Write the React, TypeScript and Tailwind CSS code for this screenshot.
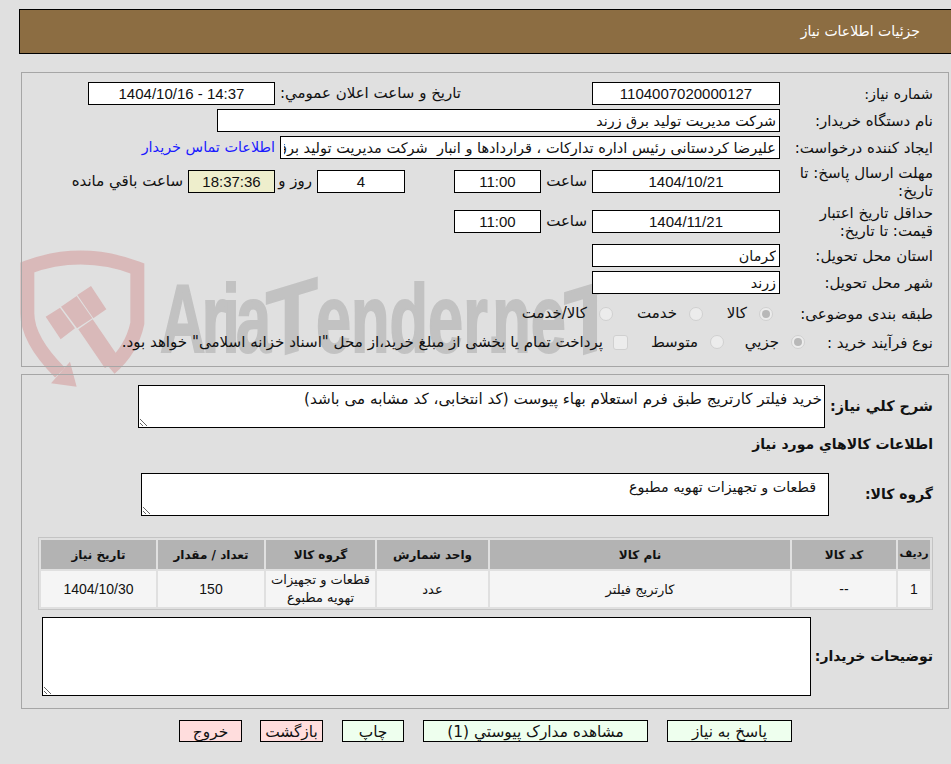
function Field({ value, className = '', num, ltr }: { value?: string; className?: string; num?: boolean; ltr?: boolean }) {
  return (
    <input
      readOnly
      dir={ltr ? 'ltr' : 'rtl'}
      value={value ?? ''}
      className={`h-[23px] shrink-0 border border-black bg-white px-[3px] text-[#111] outline-none ${num ? "text-center font-['Liberation_Sans',sans-serif] text-[15px]" : 'text-[14.3px]'} ${className}`}
    />
  );
}

function Radio({ checked }: { checked?: boolean }) {
  return (
    <span className="w-[14px] h-[14px] shrink-0 rounded-full border border-[#d0d0d0] bg-[#ececec] flex items-center justify-center">
      {checked && <span className="w-[8px] h-[8px] rounded-full bg-[#b8b8b8]" />}
    </span>
  );
}

function Row({ label, className = '', children }: { label: React.ReactNode; className?: string; children?: React.ReactNode }) {
  return (
    <div className={`flex items-center h-[23px] ${className}`}>
      <div className="w-[153px] shrink-0 text-[15px] leading-[18px]">{label}</div>
      {children}
    </div>
  );
}

function Watermark() {
  return (
    <>
      <svg className="absolute left-[15px] top-[240px]" width="300" height="160" viewBox="0 0 900 480">
        <path d="M135 398 Q37 300 37 220 L37 82 Q200 22 367 85 L367 250 Q350 330 285 385" fill="none" stroke="#d9b9b9" strokeWidth="42" />
        <path d="M165 365 L185 440 L108 430 Z" fill="#d9b9b9" />
        <path d="M92 230 L135 203 L180 265 L137 298 Z M138 200 L185 168 L232 235 L186 265 Z M187 165 L228 138 L274 208 L235 235 Z M190 268 L233 238 L310 350 L270 385 Z" fill="#d9b9b9" />
      </svg>
      <div dir="ltr" className="absolute left-[160px] top-[264px] origin-top-left scale-x-[0.65] whitespace-nowrap font-['Liberation_Sans',sans-serif] font-bold text-[97px] leading-[110px] text-[#c2c2c2] [-webkit-text-stroke:2px_#c2c2c2]">
        <span className="tracking-[-6px]">Aria</span>
        <span className="mx-[8px] inline-block scale-x-[1.35] skew-y-[-15deg]">T</span>
        <span>ender</span>
        <span className="tracking-[-20px]">.</span>
        <span>ne</span>
        <span className="mx-[8px] inline-block scale-x-[1.35] skew-y-[-15deg]">T</span>
      </div>
    </>
  );
}

const cols = [32, 104, 300, 111, 109, 106, 115];
const heads = ['رديف', 'کد کالا', 'نام کالا', 'واحد شمارش', 'گروه کالا', 'تعداد / مقدار', 'تاریخ نیاز'];

function GoodsTable() {
  return (
    <table className="mt-[21px] w-[895px] table-fixed border-separate border-spacing-[2px] border border-[#c4c4c4] text-center text-[13px]">
      <colgroup>
        {cols.map((w, i) => (
          <col key={i} style={{ width: w }} />
        ))}
      </colgroup>
      <thead>
        <tr>
          {heads.map((h, i) => (
            <th key={h} className={`h-[29px] bg-[#b3b3b3] p-0 font-bold whitespace-nowrap ${i === 0 ? 'text-[11px]' : 'text-[12px]'}`}>{h}</th>
          ))}
        </tr>
      </thead>
      <tbody>
        <tr className="bg-[#f5f5f5]">
          <td className="h-[36px] p-0 pt-[1px] font-['Liberation_Sans',sans-serif] text-[14px]">1</td>
          <td className="p-0 pt-[1px] font-['Liberation_Sans',sans-serif] text-[14px]">--</td>
          <td className="p-0 pt-[1px]">کارتریج فیلتر</td>
          <td className="p-0 pt-[1px]">عدد</td>
          <td className="p-0 leading-[18px]">قطعات و تجهیزات تهویه مطبوع</td>
          <td className="p-0 pt-[1px] font-['Liberation_Sans',sans-serif] text-[14px]">150</td>
          <td className="p-0 pt-[1px] font-['Liberation_Sans',sans-serif] text-[14px]">1404/10/30</td>
        </tr>
      </tbody>
    </table>
  );
}

function Btn({ label, w, red }: { label: string; w: string; red?: boolean }) {
  return (
    <button className={`h-[22px] shrink-0 border border-black pt-[1px] text-[15.4px] leading-[20px] text-[#111] ${red ? 'bg-[#ffdddd]' : 'bg-[#eeffee]'} ${w}`}>
      {label}
    </button>
  );
}

export default function App() {
  return (
    <div dir="rtl" className="relative w-[951px] h-[764px] overflow-hidden bg-[#e0e0e0] font-['DejaVu_Sans',sans-serif] text-[#111]">
      <Watermark />
      <div className="relative">
        <div className="pr-0 pl-[19px] pt-[9px]">
          <div className="h-[45px] border-y border-l border-black bg-[#8c6d42] pr-[31px] flex items-center text-[14px] text-white">
            جزئیات اطلاعات نیاز
          </div>
        </div>

        <div className="ml-[21px] mr-[2px] mt-[18px] h-[295px] border border-[#a6a6a6] pr-[15px] pt-[9px]">
          <Row label={<span className="text-[14.5px]">شماره نیاز:</span>}>
            <Field num value="1104007020000127" className="w-[188px]" />
            <div className="mr-[131px] w-[186px] text-[15px] whitespace-nowrap">تاریخ و ساعت اعلان عمومي:</div>
            <Field num ltr value="1404/10/16 - 14:37" className="w-[187px]" />
          </Row>
          <Row label="نام دستگاه خریدار:" className="mt-[4px]">
            <Field value="شرکت مدیریت تولید برق زرند" className="w-[563px]" />
          </Row>
          <Row label="ایجاد کننده درخواست:" className="mt-[4px]">
            <Field value="علیرضا کردستانی رئیس اداره تدارکات ، قراردادها و انبار  شرکت مدیریت تولید برق زرند" className="w-[500px] !text-[14.5px]" />
            <a className="mr-[5px] text-[14.4px] text-[#1a1aff] whitespace-nowrap">اطلاعات تماس خریدار</a>
          </Row>
          <Row label="مهلت ارسال پاسخ: تا تاریخ:" className="mt-[11px]">
            <Field num value="1404/10/21" className="w-[188px]" />
            <div className="mx-[5px] w-[41px] text-[15px]">ساعت</div>
            <Field num value="11:00" className="w-[87px]" />
            <Field num value="4" className="mr-[49px] w-[88px]" />
            <div className="mx-[5px] w-[33px] text-[15px] whitespace-nowrap">روز و</div>
            <Field num value="18:37:36" className="mr-[-1px] w-[87px] !bg-[#eeeecc]" />
            <div className="mr-[5px] text-[15px] whitespace-nowrap">ساعت باقي مانده</div>
          </Row>
          <Row label={<>حداقل تاریخ اعتبار<br />قیمت: تا تاریخ:</>} className="mt-[17px]">
            <Field num value="1404/11/21" className="w-[188px]" />
            <div className="mx-[5px] w-[41px] text-[15px]">ساعت</div>
            <Field num value="11:00" className="w-[87px]" />
          </Row>
          <Row label="استان محل تحویل:" className="mt-[11px]">
            <Field value="کرمان" className="w-[188px]" />
          </Row>
          <Row label="شهر محل تحویل:" className="mt-[4px]">
            <Field value="زرند" className="w-[188px]" />
          </Row>
          <Row label="طبقه بندی موضوعی:" className="mt-[8px]">
            <div className="flex items-center pr-[7px] text-[15px]">
              <Radio checked />
              <span className="mr-[12px] w-[44px]">کالا</span>
              <Radio />
              <span className="mr-[12px] w-[64px]">خدمت</span>
              <Radio />
              <span className="mr-[12px] whitespace-nowrap">کالا/خدمت</span>
            </div>
          </Row>
          <Row label="نوع فرآیند خرید :" className="mt-[6px]">
            <div className="mr-[-25px] flex items-center text-[15px]">
              <Radio checked />
              <span className="mr-[12px] w-[55px]">جزيي</span>
              <Radio />
              <span className="mr-[12px] w-[70px]">متوسط</span>
              <span className="w-[15px] h-[15px] shrink-0 rounded-[3px] border border-[#d0d0d0] bg-[#ececec]" />
              <span className="mr-[10px] whitespace-nowrap text-[15.1px]">پرداخت تمام یا بخشی از مبلغ خرید،از محل "اسناد خزانه اسلامی" خواهد بود.</span>
            </div>
          </Row>
        </div>

        <div className="ml-[21px] mr-[2px] mt-[7px] h-[335px] border border-[#a6a6a6] pr-[15px] pt-[10px]">
          <div className="flex items-center">
            <div className="w-[108px] shrink-0 text-[14.4px] font-bold whitespace-nowrap">شرح کلي نیاز:</div>
            <textarea readOnly defaultValue="خرید فیلتر کارتریج طبق فرم استعلام بهاء پیوست (کد انتخابی، کد مشابه می باشد)" className="h-[43px] w-[687px] border border-black bg-white px-[2px] pt-[3px] text-[15.2px] leading-[20px] outline-none" />
          </div>
          <div className="mt-[6px] h-[20px] text-[14px] font-bold leading-[20px]">اطلاعات کالاهاي مورد نیاز</div>
          <div className="mt-[19px] flex items-center">
            <div className="w-[104px] shrink-0 text-[14px] font-bold whitespace-nowrap">گروه کالا:</div>
            <textarea readOnly defaultValue="قطعات و تجهیزات تهویه مطبوع" className="h-[43px] w-[688px] border border-black bg-white pr-[12px] pt-[3px] text-[14.3px] outline-none" />
          </div>
          <GoodsTable />
          <div className="mt-[7px] flex items-center">
            <div className="w-[122px] shrink-0 text-[14px] font-bold whitespace-nowrap">توضیحات خریدار:</div>
            <textarea readOnly className="h-[79px] w-[769px] border border-black bg-white outline-none" />
          </div>
        </div>

        <div className="mt-[11px] flex gap-[19px] pr-[159px]">
          <Btn label="پاسخ به نیاز" w="w-[125px]" />
          <Btn label="مشاهده مدارک پیوستي (1)" w="w-[225px]" />
          <Btn label="چاپ" w="w-[62px]" />
          <Btn label="بازگشت" w="w-[63px]" red />
          <Btn label="خروج" w="mr-[-1px] w-[63px]" red />
        </div>
      </div>
    </div>
  );
}
